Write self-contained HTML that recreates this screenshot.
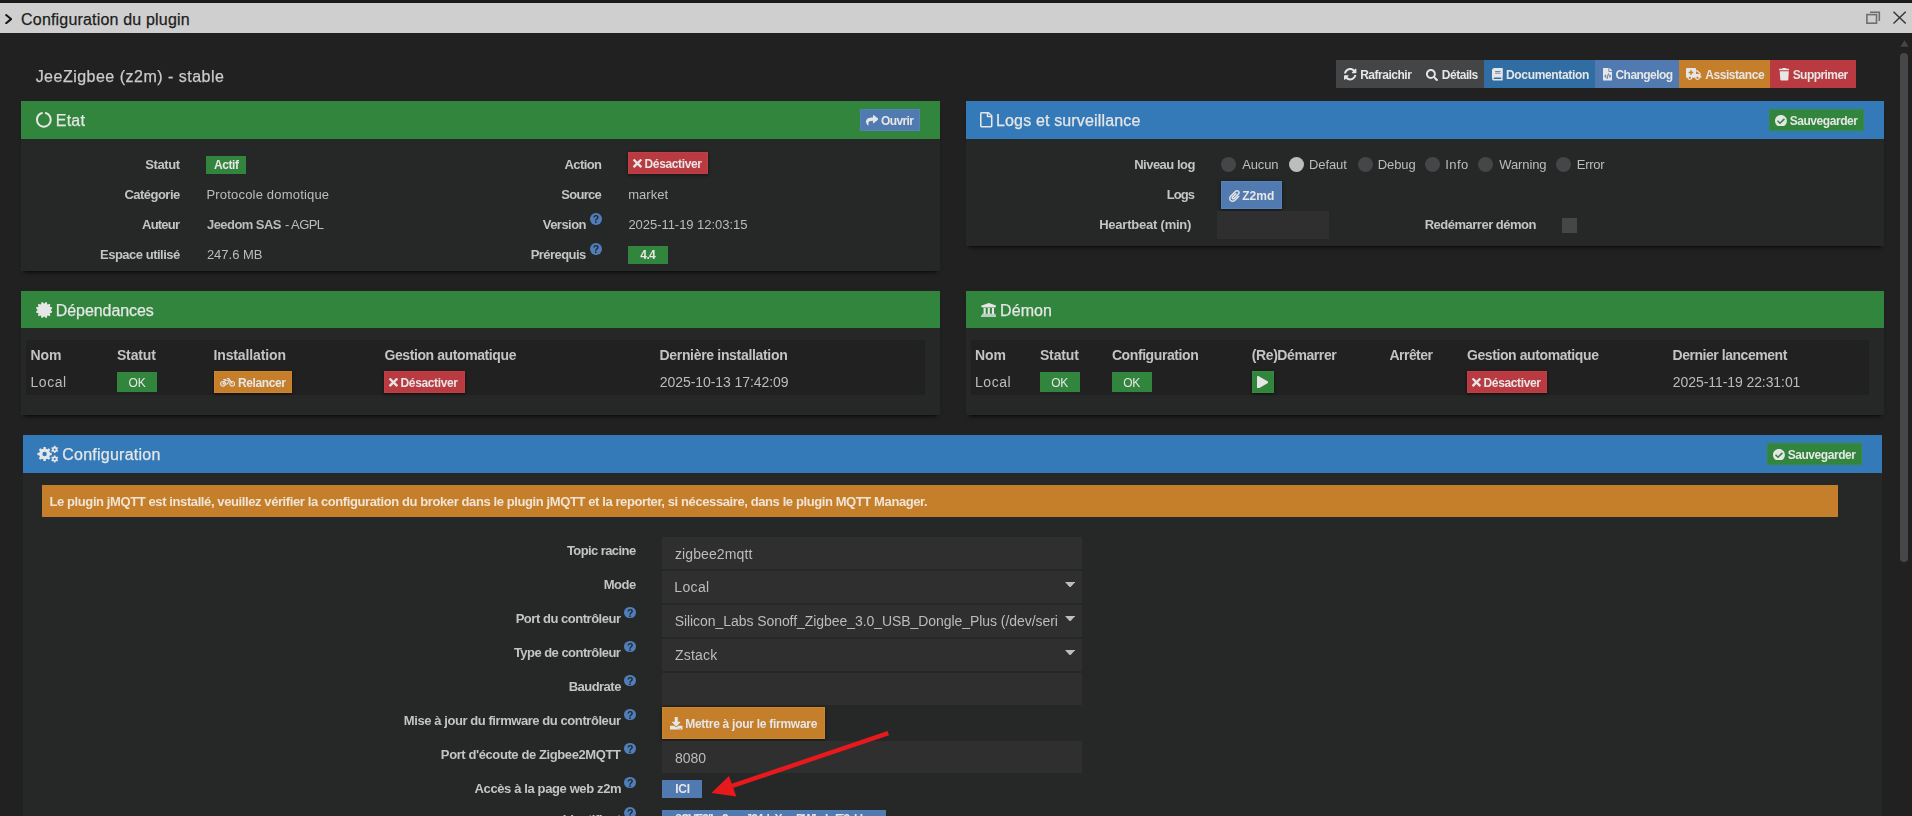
<!DOCTYPE html>
<html lang="fr">
<head>
<meta charset="utf-8">
<title>Configuration du plugin</title>
<style>
html,body{margin:0;padding:0;background:#212121;}
body{width:1912px;height:816px;overflow:hidden;position:relative;font-family:"Liberation Sans",sans-serif;}
#root{position:absolute;left:0;top:0;width:1912px;height:816px;overflow:hidden;background:#212121;}
#root div,#root svg,#root span.t,#root main,#root header{position:absolute;}
#root header{left:0;top:0;width:1912px;height:33px;}
#root main{left:0;top:0;width:1912px;height:816px;will-change:transform;}
span.t{white-space:pre;line-height:20px;height:20px;}
span.h{-webkit-text-stroke:0.25px currentColor;}
.sh{box-shadow:0 4px 4px -3px rgba(0,0,0,.85);}
.bs{box-shadow:0 1px 3px 0 rgba(0,0,0,.55);}
.q{border-radius:50%;text-align:center;font-weight:700;}
</style>
</head>
<body>
<div id="root">
<header>
<div style="left:0px;top:0px;width:1912px;height:3px;background:#1b1b1b;"></div>
<div style="left:0px;top:3px;width:1912px;height:30px;background:#cfcfcf;"></div>
<svg style="left:5.10px;top:13.70px" width="7.40" height="10.20" viewBox="27.5 37.7 265.0 436.7" preserveAspectRatio="none"><path d="M285.476 272.971L91.132 467.314c-9.373 9.373-24.569 9.373-33.941 0l-22.667-22.667c-9.357-9.357-9.375-24.522-.040-33.901L188.505 256 34.484 101.255c-9.335-9.379-9.317-24.544.040-33.901l22.667-22.667c9.373-9.373 24.569-9.373 33.941 0L285.475 239.030c9.373 9.372 9.373 24.568.001 33.941z" fill="#161616"/></svg>
<span class="t h" style="left:21.09px;top:10px;font-size:16px;color:#1d1d1d;letter-spacing:0.18px;">Configuration du plugin</span>
<svg style="left:1865px;top:10px;" width="16" height="15" viewBox="0 0 16 15"><path d="M5 2.2 H14.3 V11" fill="none" stroke="#6e6e6e" stroke-width="1.6"/><rect x="1.9" y="4.6" width="9.6" height="8.6" fill="none" stroke="#6e6e6e" stroke-width="1.6"/></svg>
<svg style="left:1892px;top:10px;" width="15" height="15" viewBox="0 0 15 15"><path d="M1.5 1.7 L13.7 13.5 M13.7 1.7 L1.5 13.5" fill="none" stroke="#333" stroke-width="1.4"/></svg>
</header>
<main>
<svg style="left:1900px;top:40px;" width="9" height="7" viewBox="0 0 9 7"><path d="M4.5 0.3 L8.6 6.8 L0.4 6.8 Z" fill="#464749"/></svg>
<div style="left:1900px;top:53px;width:8px;height:509px;background:#464749;border-radius:4px;"></div>
<span class="t h" style="left:35.64px;top:67px;font-size:16px;color:#cacaca;letter-spacing:0.49px;">JeeZigbee (z2m) - stable</span>
<nav>
<div style="left:1336px;top:60px;width:148px;height:28px;background:#444547;"></div>
<div style="left:1484px;top:60px;width:111px;height:28px;background:#2f6da3;"></div>
<div style="left:1595px;top:60px;width:84px;height:28px;background:#507ab0;"></div>
<div style="left:1679px;top:60px;width:91px;height:28px;background:#c57e2a;"></div>
<div style="left:1770px;top:60px;width:86px;height:28px;background:#b93a40;"></div>
<svg style="left:1344.15px;top:68.35px" width="12.40" height="12.40" viewBox="8.0 8.0 496.0 496.0" preserveAspectRatio="none"><path d="M370.72 133.28C339.458 104.008 298.888 87.962 255.848 88c-77.458.068-144.328 53.178-162.791 126.85-1.344 5.363-6.122 9.15-11.651 9.15H24.103c-7.498 0-13.194-6.807-11.807-14.176C33.933 94.924 134.813 8 256 8c66.448 0 126.791 26.136 171.315 68.685L463.03 40.97C478.149 25.851 504 36.559 504 57.941V192c0 13.255-10.745 24-24 24H345.941c-21.382 0-32.09-25.851-16.971-40.971l41.75-41.749zM32 296h134.059c21.382 0 32.09 25.851 16.971 40.971l-41.75 41.75c31.262 29.273 71.835 45.319 114.876 45.28 77.418-.07 144.315-53.144 162.787-126.849 1.344-5.363 6.122-9.15 11.651-9.15h57.304c7.498 0 13.194 6.807 11.807 14.176C478.067 417.076 377.187 504 256 504c-66.448 0-126.791-26.136-171.315-68.685L48.97 471.03C33.851 486.149 8 475.441 8 454.059V320c0-13.255 10.745-24 24-24z" fill="#e6e6e6"/></svg>
<span class="t" style="left:1360.16px;top:65px;font-size:12px;color:#e6e6e6;font-weight:700;letter-spacing:-0.48px;">Rafraichir</span>
<svg style="left:1426.05px;top:68.55px" width="12.10" height="12.20" viewBox="0.0 0.0 512.0 512.1" preserveAspectRatio="none"><path d="M505 442.7L405.3 343c-4.5-4.5-10.6-7-17-7H372c27.6-35.3 44-79.7 44-128C416 93.1 322.9 0 208 0S0 93.1 0 208s93.1 208 208 208c48.3 0 92.7-16.4 128-44v16.3c0 6.4 2.5 12.5 7 17l99.7 99.7c9.4 9.4 24.6 9.4 33.9 0l28.3-28.3c9.4-9.4 9.4-24.6.1-34zM208 336c-70.7 0-128-57.2-128-128 0-70.7 57.2-128 128-128 70.7 0 128 57.2 128 128 0 70.7-57.2 128-128 128z" fill="#e6e6e6"/></svg>
<span class="t" style="left:1441.86px;top:65px;font-size:12px;color:#e6e6e6;font-weight:700;letter-spacing:-0.49px;">Détails</span>
<svg style="left:1492.25px;top:68.25px" width="10.80" height="12.50" viewBox="0.0 0.0 448.0 512.0" preserveAspectRatio="none"><path d="M448 360V24c0-13.3-10.7-24-24-24H96C43 0 0 43 0 96v320c0 53 43 96 96 96h328c13.3 0 24-10.7 24-24v-16c0-7.5-3.5-14.3-8.9-18.700-4.200-15.400-4.200-59.300 0-74.700 5.400-4.300 8.900-11.100 8.900-18.600zM128 134c0-3.300 2.700-6 6-6h212c3.300 0 6 2.700 6 6v20c0 3.300-2.700 6-6 6H134c-3.300 0-6-2.700-6-6v-20zm0 64c0-3.300 2.700-6 6-6h212c3.300 0 6 2.700 6 6v20c0 3.300-2.700 6-6 6H134c-3.300 0-6-2.700-6-6v-20zm253.400 250H96c-17.700 0-32-14.300-32-32 0-17.600 14.400-32 32-32h285.400c-1.900 17.100-1.900 46.900 0 64z" fill="#e6e6e6"/></svg>
<span class="t" style="left:1506.06px;top:65px;font-size:12px;color:#e6e6e6;font-weight:700;letter-spacing:-0.34px;">Documentation</span>
<svg style="left:1602.65px;top:68.25px" width="9.40" height="12.50" viewBox="0.0 0.0 384.0 512.0" preserveAspectRatio="none"><path d="M384 121.941V128H256V0h6.059c6.365 0 12.47 2.529 16.971 7.029l97.941 97.941A24.005 24.005 0 0 1 384 121.941zM248 160c-13.2 0-24-10.8-24-24V0H24C10.745 0 0 10.745 0 24v464c0 13.255 10.745 24 24 24h336c13.255 0 24-10.745 24-24V160H248zM123.206 400.505a5.4 5.4 0 0 1-7.633.246l-64.866-60.812a5.4 5.4 0 0 1 0-7.879l64.866-60.812a5.4 5.4 0 0 1 7.633.246l19.579 20.885a5.4 5.4 0 0 1-.372 7.747L101.65 336l40.763 35.874a5.4 5.4 0 0 1 .372 7.747l-19.579 20.884zm51.295 50.479l-27.453-7.97a5.402 5.402 0 0 1-3.681-6.692l61.44-211.626a5.402 5.402 0 0 1 6.692-3.681l27.452 7.97a5.4 5.4 0 0 1 3.68 6.692l-61.44 211.626a5.397 5.397 0 0 1-6.69 3.681zm160.792-111.045l-64.866 60.812a5.4 5.4 0 0 1-7.633-.246l-19.58-20.885a5.4 5.4 0 0 1 .372-7.747L284.35 336l-40.763-35.874a5.4 5.4 0 0 1-.372-7.747l19.58-20.885a5.4 5.4 0 0 1 7.633-.246l64.866 60.812a5.4 5.4 0 0 1-.001 7.879z" fill="#e6e6e6"/></svg>
<span class="t" style="left:1615.52px;top:65px;font-size:12px;color:#e6e6e6;font-weight:700;letter-spacing:-0.56px;">Changelog</span>
<svg style="left:1686.25px;top:68.45px" width="15.40" height="12.10" viewBox="0.0 0.0 640.0 512.0" preserveAspectRatio="none"><path d="M624 352h-16V243.900c0-12.700-5.100-24.900-14.100-33.900L494 110.100c-9-9-21.200-14.100-33.900-14.100H416V48c0-26.500-21.500-48-48-48H48C21.500 0 0 21.500 0 48v320c0 26.500 21.500 48 48 48h16c0 53 43 96 96 96s96-43 96-96h128c0 53 43 96 96 96s96-43 96-96h48c8.800 0 16-7.200 16-16v-32c0-8.800-7.200-16-16-16zM160 464c-26.500 0-48-21.500-48-48s21.500-48 48-48 48 21.500 48 48-21.500 48-48 48zm144-248c0 4.400-3.600 8-8 8h-56v56c0 4.400-3.600 8-8 8h-48c-4.400 0-8-3.600-8-8v-56h-56c-4.400 0-8-3.600-8-8v-48c0-4.400 3.600-8 8-8h56v-56c0-4.400 3.600-8 8-8h48c4.400 0 8 3.600 8 8v56h56c4.400 0 8 3.600 8 8v48zm176 248c-26.500 0-48-21.500-48-48s21.500-48 48-48 48 21.500 48 48-21.500 48-48 48zm80-208H416V144h44.100l99.900 99.900V256z" fill="#e6e6e6"/></svg>
<span class="t" style="left:1705.29px;top:65px;font-size:12px;color:#e6e6e6;font-weight:700;letter-spacing:-0.45px;">Assistance</span>
<svg style="left:1778.55px;top:68.25px" width="10.60" height="12.50" viewBox="0.0 -0.0 448.0 512.0" preserveAspectRatio="none"><path d="M432 32H312l-9.400-18.700A24 24 0 0 0 281.100 0H166.800a23.720 23.720 0 0 0-21.400 13.300L136 32H16A16 16 0 0 0 0 48v32a16 16 0 0 0 16 16h416a16 16 0 0 0 16-16V48a16 16 0 0 0-16-16zM53.200 467a48 48 0 0 0 47.900 45h245.800a48 48 0 0 0 47.900-45L416 128H32z" fill="#e6e6e6"/></svg>
<span class="t" style="left:1792.66px;top:65px;font-size:12px;color:#e6e6e6;font-weight:700;letter-spacing:-0.55px;">Supprimer</span>
</nav>
<section>
<div class="sh" style="left:21px;top:101px;width:919px;height:170px;background:#262828;"></div>
<div style="left:21px;top:101px;width:919px;height:38px;background:#32853c;"></div>
<svg style="left:36.05px;top:112.05px" width="15.70" height="15.70" viewBox="8.0 15.0 496.0 489.0" preserveAspectRatio="none"><path d="M288 39.056v16.659c0 10.804 7.281 20.159 17.686 23.066C383.204 100.434 440 171.518 440 256c0 101.689-82.295 184-184 184-101.689 0-184-82.295-184-184 0-84.470 56.786-155.564 134.312-177.219C216.719 75.874 224 66.517 224 55.712V39.064c0-15.709-14.834-27.153-30.046-23.234C86.603 43.482 7.394 141.206 8.003 257.332c.72 137.052 111.477 246.956 248.531 246.667C393.255 503.711 504 392.788 504 256c0-115.633-79.140-212.779-186.211-240.236C302.678 11.889 288 23.456 288 39.056z" fill="#e6e6e6"/></svg>
<span class="t h" style="left:55.73px;top:111px;font-size:16px;color:#e6e6e6;letter-spacing:0.25px;">Etat</span>
<div style="left:860px;top:109px;width:60px;height:22px;background:#507ab0;box-shadow:inset 0 0 0 1px #5681bb;"></div>
<svg style="left:866.05px;top:115.25px" width="12.40" height="10.50" viewBox="0.0 32.0 512.0 448.0" preserveAspectRatio="none"><path d="M503.691 189.836L327.687 37.851C312.281 24.546 288 35.347 288 56.015v80.053C127.371 137.907 0 170.100 0 322.326c0 61.441 39.581 122.309 83.333 154.132 13.653 9.931 33.111-2.533 28.077-18.631C66.066 312.814 132.917 274.316 288 272.085V360c0 20.700 24.300 31.453 39.687 18.164l176.004-152c11.071-9.562 11.086-26.753 0-36.328z" fill="#e6e6e6"/></svg>
<span class="t" style="left:881.12px;top:111px;font-size:12px;color:#e6e6e6;font-weight:700;letter-spacing:-0.66px;">Ouvrir</span>
<span class="t" style="left:145.34px;top:155px;font-size:13px;color:#c4c4c4;font-weight:700;letter-spacing:-0.44px;">Statut</span>
<div style="left:206px;top:156px;width:40px;height:18px;background:#32853c;"></div>
<span class="t" style="left:214.09px;top:155px;font-size:12px;color:#e6e6e6;font-weight:700;letter-spacing:-0.45px;">Actif</span>
<span class="t" style="left:124.49px;top:185px;font-size:13px;color:#c4c4c4;font-weight:700;letter-spacing:-0.53px;">Catégorie</span>
<span class="t" style="left:206.45px;top:185px;font-size:13px;color:#bcbcbc;letter-spacing:0.19px;">Protocole domotique</span>
<span class="t" style="left:142.05px;top:215px;font-size:13px;color:#c4c4c4;font-weight:700;letter-spacing:-0.78px;">Auteur</span>
<span class="t" style="left:207.05px;top:215px;font-size:13px;color:#bcbcbc;font-weight:700;letter-spacing:-0.57px;">Jeedom SAS</span>
<span class="t" style="left:284.95px;top:215px;font-size:13px;color:#bcbcbc;letter-spacing:-0.55px;">- AGPL</span>
<span class="t" style="left:99.97px;top:245px;font-size:13px;color:#c4c4c4;font-weight:700;letter-spacing:-0.49px;">Espace utilisé</span>
<span class="t" style="left:206.89px;top:245px;font-size:13px;color:#bcbcbc;">247.6 MB</span>
<span class="t" style="left:564.55px;top:155px;font-size:13px;color:#c4c4c4;font-weight:700;letter-spacing:-0.59px;">Action</span>
<div style="left:628px;top:152px;width:80px;height:22px;background:#b93a40;box-shadow:inset 0 0 0 1px #c23d44,0 1px 3px 0 rgba(0,0,0,.55);"></div>
<svg style="left:633.45px;top:159.25px" width="8.90" height="8.70" viewBox="0.0 80.0 352.0 352.0" preserveAspectRatio="none"><path d="M242.720 256l100.070-100.070c12.280-12.280 12.280-32.190 0-44.480l-22.240-22.240c-12.280-12.280-32.190-12.280-44.480 0L176 189.280 75.930 89.210c-12.280-12.280-32.190-12.280-44.480 0L9.210 111.450c-12.280 12.280-12.280 32.190 0 44.480L109.280 256 9.210 356.070c-12.280 12.280-12.280 32.190 0 44.480l22.240 22.240c12.280 12.280 32.200 12.280 44.480 0L176 322.720l100.070 100.070c12.280 12.280 32.200 12.280 44.480 0l22.240-22.240c12.280-12.280 12.280-32.190 0-44.480L242.720 256z" fill="#e6e6e6"/></svg>
<span class="t" style="left:644.56px;top:154px;font-size:12px;color:#e6e6e6;font-weight:700;letter-spacing:-0.36px;">Désactiver</span>
<span class="t" style="left:561.34px;top:185px;font-size:13px;color:#c4c4c4;font-weight:700;letter-spacing:-0.71px;">Source</span>
<span class="t" style="left:628.15px;top:185px;font-size:13px;color:#bcbcbc;letter-spacing:0.04px;">market</span>
<span class="t" style="left:542.76px;top:215px;font-size:13px;color:#c4c4c4;font-weight:700;letter-spacing:-0.53px;">Version</span>
<div class="q" style="left:590px;top:213.4px;width:11.8px;height:11.8px;line-height:12.4px;background:#4f7eba;color:#262828;font-size:10.5px;">?</div>
<span class="t" style="left:628.39px;top:215px;font-size:13px;color:#bcbcbc;letter-spacing:-0.04px;">2025-11-19 12:03:15</span>
<span class="t" style="left:530.67px;top:245px;font-size:13px;color:#c4c4c4;font-weight:700;letter-spacing:-0.54px;">Prérequis</span>
<div class="q" style="left:590px;top:243.4px;width:11.8px;height:11.8px;line-height:12.4px;background:#4f7eba;color:#262828;font-size:10.5px;">?</div>
<div style="left:628px;top:246px;width:40px;height:18px;background:#32853c;"></div>
<span class="t" style="left:640.34px;top:245px;font-size:12px;color:#e6e6e6;font-weight:700;letter-spacing:-0.61px;">4.4</span>
</section>
<section>
<div class="sh" style="left:966px;top:101px;width:918px;height:145px;background:#262828;"></div>
<div style="left:966px;top:101px;width:918px;height:38px;background:#347ab8;"></div>
<svg style="left:980.25px;top:112.25px" width="12.50" height="15.50" viewBox="0.0 -0.1 384.0 512.1" preserveAspectRatio="none"><path d="M369.900 97.900L286 14C277 5 264.800-.1 252.100-.1H48C21.500 0 0 21.500 0 48v416c0 26.500 21.500 48 48 48h288c26.500 0 48-21.500 48-48V131.900c0-12.700-5.100-25-14.100-34zM332.100 128H256V51.900l76.100 76.100zM48 464V48h160v104c0 13.300 10.700 24 24 24h104v288H48z" fill="#e6e6e6"/></svg>
<span class="t h" style="left:996.03px;top:111px;font-size:16px;color:#e6e6e6;letter-spacing:0.15px;">Logs et surveillance</span>
<div style="left:1769px;top:109px;width:95px;height:22px;background:#32853c;box-shadow:inset 0 0 0 1px #358b3e;"></div>
<svg style="left:1774.85px;top:114.65px" width="11.90" height="11.80" viewBox="8.0 8.0 496.0 496.0" preserveAspectRatio="none"><path d="M504 256c0 136.967-111.033 248-248 248S8 392.967 8 256 119.033 8 256 8s248 111.033 248 248zM227.314 387.314l184-184c6.248-6.248 6.248-16.379 0-22.627l-22.627-22.627c-6.248-6.249-16.379-6.249-22.628 0L216 308.118l-70.059-70.059c-6.248-6.248-16.379-6.248-22.628 0l-22.627 22.627c-6.248 6.248-6.248 16.379 0 22.627l104 104c6.249 6.249 16.379 6.249 22.628.001z" fill="#e6e6e6"/></svg>
<span class="t" style="left:1789.66px;top:111px;font-size:12px;color:#e6e6e6;font-weight:700;letter-spacing:-0.44px;">Sauvegarder</span>
<span class="t" style="left:1134.17px;top:155px;font-size:13px;color:#c4c4c4;font-weight:700;letter-spacing:-0.5px;">Niveau log</span>
<div style="left:1221px;top:157px;width:15px;height:15px;background:#454648;border-radius:50%;"></div>
<span class="t" style="left:1242.3px;top:155px;font-size:13px;color:#bcbcbc;letter-spacing:-0.17px;">Aucun</span>
<div style="left:1289px;top:157px;width:15px;height:15px;background:#bdbdbd;border-radius:50%;"></div>
<span class="t" style="left:1308.95px;top:155px;font-size:13px;color:#bcbcbc;letter-spacing:-0.08px;">Defaut</span>
<div style="left:1358px;top:157px;width:15px;height:15px;background:#454648;border-radius:50%;"></div>
<span class="t" style="left:1377.75px;top:155px;font-size:13px;color:#bcbcbc;letter-spacing:-0.09px;">Debug</span>
<div style="left:1425px;top:157px;width:15px;height:15px;background:#454648;border-radius:50%;"></div>
<span class="t" style="left:1445.32px;top:155px;font-size:13px;color:#bcbcbc;letter-spacing:0.42px;">Info</span>
<div style="left:1478px;top:157px;width:15px;height:15px;background:#454648;border-radius:50%;"></div>
<span class="t" style="left:1499.32px;top:155px;font-size:13px;color:#bcbcbc;letter-spacing:-0.11px;">Warning</span>
<div style="left:1556px;top:157px;width:15px;height:15px;background:#454648;border-radius:50%;"></div>
<span class="t" style="left:1576.75px;top:155px;font-size:13px;color:#bcbcbc;letter-spacing:-0.28px;">Error</span>
<span class="t" style="left:1166.67px;top:185px;font-size:13px;color:#c4c4c4;font-weight:700;letter-spacing:-0.87px;">Logs</span>
<div style="left:1221px;top:181px;width:61px;height:28px;background:#507ab0;box-shadow:inset 0 0 0 1px #5681bb,0 1px 3px 0 rgba(0,0,0,.55);"></div>
<svg style="left:1229.05px;top:189.55px" width="10.80" height="12.00" viewBox="0.0 -0.0 448.0 512.0" preserveAspectRatio="none"><path d="M43.246 466.142c-58.430-60.289-57.341-157.511 1.386-217.581L254.392 34c44.316-45.332 116.351-45.336 160.671 0 43.890 44.894 43.943 117.329 0 162.276L232.214 383.128c-29.855 30.537-78.633 30.111-107.982-.998-28.275-29.970-27.368-77.473 1.452-106.953l143.743-146.835c6.182-6.314 16.312-6.422 22.626-.241l22.861 22.379c6.315 6.182 6.422 16.312.241 22.626L171.427 319.927c-4.932 5.045-5.236 13.428-.648 18.292 4.372 4.634 11.245 4.711 15.688.165l182.849-186.851c19.613-20.062 19.613-52.725-.011-72.798-19.189-19.627-49.957-19.637-69.154 0L90.390 293.295c-34.763 35.560-35.299 93.120-1.191 128.313 34.010 35.093 88.985 35.137 123.058.286l172.060-175.999c6.177-6.319 16.307-6.433 22.626-.256l22.877 22.364c6.319 6.177 6.434 16.307.256 22.626l-172.060 175.998c-59.576 60.938-155.943 60.216-214.770-.485z" fill="#e6e6e6"/></svg>
<span class="t" style="left:1242.29px;top:186px;font-size:12px;color:#e6e6e6;font-weight:700;letter-spacing:-0.01px;">Z2md</span>
<span class="t" style="left:1099.17px;top:215px;font-size:13px;color:#c4c4c4;font-weight:700;letter-spacing:-0.22px;">Heartbeat (min)</span>
<div style="left:1217px;top:211px;width:112px;height:28px;background:#2f2f2f;"></div>
<span class="t" style="left:1424.67px;top:215px;font-size:13px;color:#c4c4c4;font-weight:700;letter-spacing:-0.49px;">Redémarrer démon</span>
<div style="left:1562px;top:218px;width:15px;height:15px;background:#454648;"></div>
</section>
<section>
<div class="sh" style="left:21px;top:291px;width:919px;height:124px;background:#262828;"></div>
<div style="left:21px;top:291px;width:919px;height:37px;background:#32853c;"></div>
<svg style="left:35.85px;top:301.95px" width="16.30" height="16.00" viewBox="0.0 -0.0 512.0 512.0" preserveAspectRatio="none"><path d="M458.622 255.920l45.985-45.005c13.708-12.977 7.316-36.039-10.664-40.339l-62.650-15.990 17.661-62.015c4.991-17.838-11.829-34.663-29.661-29.671l-61.994 17.667-15.984-62.671C337.085.197 313.765-6.276 300.990 7.228L256 53.570 211.011 7.229c-12.630-13.351-36.047-7.234-40.325 10.668l-15.984 62.671-61.995-17.667C74.870 57.907 58.056 74.738 63.046 92.572l17.661 62.015-62.650 15.990C.069 174.878-6.310 197.944 7.392 210.915l45.985 45.005-45.985 45.004c-13.708 12.977-7.316 36.039 10.664 40.339l62.650 15.990-17.661 62.015c-4.991 17.838 11.829 34.663 29.661 29.671l61.994-17.667 15.984 62.671c4.439 18.575 27.696 24.018 40.325 10.668L256 458.610l44.989 46.001c12.500 13.488 35.987 7.486 40.325-10.668l15.984-62.671 61.994 17.667c17.836 4.994 34.651-11.837 29.661-29.671l-17.661-62.015 62.650-15.990c17.987-4.302 24.366-27.367 10.664-40.339l-45.984-45.004z" fill="#e6e6e6"/></svg>
<span class="t h" style="left:55.73px;top:301px;font-size:16px;color:#e6e6e6;letter-spacing:-0.06px;">Dépendances</span>
<div style="left:26px;top:340px;width:899px;height:55px;background:#212121;"></div>
<span class="t" style="left:30.6px;top:345px;font-size:14px;color:#c4c4c4;font-weight:700;letter-spacing:-0.15px;">Nom</span>
<span class="t" style="left:116.92px;top:345px;font-size:14px;color:#c4c4c4;font-weight:700;letter-spacing:-0.12px;">Statut</span>
<span class="t" style="left:213.5px;top:345px;font-size:14px;color:#c4c4c4;font-weight:700;letter-spacing:-0.13px;">Installation</span>
<span class="t" style="left:384.41px;top:345px;font-size:14px;color:#c4c4c4;font-weight:700;letter-spacing:-0.4px;">Gestion automatique</span>
<span class="t" style="left:659.5px;top:345px;font-size:14px;color:#c4c4c4;font-weight:700;letter-spacing:-0.32px;">Dernière installation</span>
<span class="t" style="left:30.47px;top:372px;font-size:14px;color:#bcbcbc;letter-spacing:0.56px;">Local</span>
<div style="left:117px;top:372px;width:40px;height:20px;background:#32853c;"></div>
<span class="t" style="left:128.57px;top:373px;font-size:12px;color:#e6e6e6;letter-spacing:-0.14px;">OK</span>
<div style="left:214px;top:371px;width:78px;height:22px;background:#c57e2a;box-shadow:inset 0 0 0 1px #d0852d,0 1px 3px 0 rgba(0,0,0,.55);"></div>
<svg style="left:219.75px;top:378.25px" width="15.30" height="8.70" viewBox="-0.0 64.0 640.0 384.0" preserveAspectRatio="none"><path d="M512.509 192.001c-16.373-.064-32.030 2.955-46.436 8.495l-77.680-125.153A24 24 0 0 0 368.001 64h-64c-8.837 0-16 7.163-16 16v16c0 8.837 7.163 16 16 16h50.649l14.896 24H256.002v-16c0-8.837-7.163-16-16-16h-87.459c-13.441 0-24.777 10.999-24.536 24.437.232 13.044 10.876 23.563 23.995 23.563h48.726l-29.417 47.520c-13.433-4.830-27.904-7.483-42.992-7.520C57.094 191.820-.337 249.742.001 320.974.330 391.386 57.520 448 128.002 448c59.642 0 109.758-40.793 123.967-96h52.033a24 24 0 0 0 20.406-11.367L410.370 201.770l14.938 24.067c-25.455 23.448-41.385 57.081-41.307 94.437.145 68.833 57.899 127.051 126.729 127.719 70.606.685 128.181-55.803 129.255-125.996 1.086-70.941-56.526-129.720-127.476-129.996zM186.750 265.772c9.727 10.529 16.673 23.661 19.642 38.228h-43.306l23.664-38.228zM128.002 400c-44.112 0-80-35.888-80-80s35.888-80 80-80c5.869 0 11.586.653 17.099 1.859l-45.505 73.509C89.715 331.327 101.213 352 120.002 352h81.300c-12.370 28.225-40.562 48-73.300 48zm162.630-96h-35.624c-3.960-31.756-19.556-59.894-42.383-80.026L237.371 184h127.547l-74.286 120zm217.057 95.886c-41.036-2.165-74.049-35.692-75.627-76.755-.812-21.121 6.633-40.518 19.335-55.263l44.433 71.586c4.660 7.508 14.524 9.816 22.032 5.156l13.594-8.437c7.508-4.660 9.817-14.524 5.156-22.032l-44.468-71.643a79.901 79.901 0 0 1 19.858-2.497c44.112 0 80 35.888 80 80-.001 45.540-38.252 82.316-84.313 79.885z" fill="#e6e6e6"/></svg>
<span class="t" style="left:237.96px;top:373px;font-size:12px;color:#e6e6e6;font-weight:700;letter-spacing:-0.4px;">Relancer</span>
<div style="left:384px;top:371px;width:81px;height:22px;background:#b93a40;box-shadow:inset 0 0 0 1px #c23d44,0 1px 3px 0 rgba(0,0,0,.55);"></div>
<svg style="left:389.45px;top:378.25px" width="8.90" height="8.70" viewBox="0.0 80.0 352.0 352.0" preserveAspectRatio="none"><path d="M242.720 256l100.070-100.070c12.280-12.280 12.280-32.190 0-44.480l-22.240-22.240c-12.280-12.280-32.190-12.280-44.480 0L176 189.280 75.930 89.210c-12.280-12.280-32.190-12.280-44.480 0L9.210 111.450c-12.280 12.280-12.280 32.190 0 44.480L109.280 256 9.210 356.070c-12.280 12.280-12.280 32.190 0 44.480l22.240 22.240c12.280 12.280 32.200 12.280 44.480 0L176 322.720l100.070 100.070c12.280 12.280 32.200 12.280 44.480 0l22.240-22.240c12.280-12.280 12.280-32.190 0-44.480L242.720 256z" fill="#e6e6e6"/></svg>
<span class="t" style="left:400.56px;top:373px;font-size:12px;color:#e6e6e6;font-weight:700;letter-spacing:-0.36px;">Désactiver</span>
<span class="t" style="left:659.86px;top:372px;font-size:14px;color:#bcbcbc;letter-spacing:-0.07px;">2025-10-13 17:42:09</span>
</section>
<section>
<div class="sh" style="left:966px;top:291px;width:918px;height:124px;background:#262828;"></div>
<div style="left:966px;top:291px;width:918px;height:37px;background:#32853c;"></div>
<svg style="left:980.75px;top:303.15px" width="15.60" height="13.80" viewBox="16.0 32.0 480.0 448.0" preserveAspectRatio="none"><path d="M496 128v16a8 8 0 0 1-8 8h-24v12c0 6.627-5.373 12-12 12H60c-6.627 0-12-5.373-12-12v-12H24a8 8 0 0 1-8-8v-16a8 8 0 0 1 4.941-7.392l232-88a7.996 7.996 0 0 1 6.118 0l232 88A8 8 0 0 1 496 128zm-24 304H40c-13.255 0-24 10.745-24 24v16a8 8 0 0 0 8 8h464a8 8 0 0 0 8-8v-16c0-13.255-10.745-24-24-24zM96 192v192H60c-6.627 0-12 5.373-12 12v20h416v-20c0-6.627-5.373-12-12-12h-36V192h-64v192h-64V192h-64v192h-64V192H96z" fill="#e6e6e6"/></svg>
<span class="t h" style="left:1000.03px;top:301px;font-size:16px;color:#e6e6e6;letter-spacing:0.1px;">Démon</span>
<div style="left:971px;top:340px;width:898px;height:55px;background:#212121;"></div>
<span class="t" style="left:975.1px;top:345px;font-size:14px;color:#c4c4c4;font-weight:700;letter-spacing:-0.15px;">Nom</span>
<span class="t" style="left:1039.92px;top:345px;font-size:14px;color:#c4c4c4;font-weight:700;letter-spacing:-0.12px;">Statut</span>
<span class="t" style="left:1111.92px;top:345px;font-size:14px;color:#c4c4c4;font-weight:700;letter-spacing:-0.41px;">Configuration</span>
<span class="t" style="left:1251.83px;top:345px;font-size:14px;color:#c4c4c4;font-weight:700;letter-spacing:-0.42px;">(Re)Démarrer</span>
<span class="t" style="left:1389.54px;top:345px;font-size:14px;color:#c4c4c4;font-weight:700;letter-spacing:-0.55px;">Arrêter</span>
<span class="t" style="left:1466.91px;top:345px;font-size:14px;color:#c4c4c4;font-weight:700;letter-spacing:-0.4px;">Gestion automatique</span>
<span class="t" style="left:1672.5px;top:345px;font-size:14px;color:#c4c4c4;font-weight:700;letter-spacing:-0.46px;">Dernier lancement</span>
<span class="t" style="left:974.97px;top:372px;font-size:14px;color:#bcbcbc;letter-spacing:0.56px;">Local</span>
<div style="left:1040px;top:372px;width:40px;height:20px;background:#32853c;"></div>
<span class="t" style="left:1051.27px;top:373px;font-size:12px;color:#e6e6e6;letter-spacing:-0.34px;">OK</span>
<div style="left:1112px;top:372px;width:40px;height:20px;background:#32853c;"></div>
<span class="t" style="left:1123.27px;top:373px;font-size:12px;color:#e6e6e6;letter-spacing:-0.34px;">OK</span>
<div style="left:1252px;top:371px;width:22px;height:22px;background:#32853c;box-shadow:inset 0 0 0 1px #358b3e,0 1px 3px 0 rgba(0,0,0,.55);"></div>
<svg style="left:1257.45px;top:375.85px" width="11.10" height="12.50" viewBox="0.0 0.0 448.0 512.0" preserveAspectRatio="none"><path d="M424.400 214.700L72.400 6.600C43.800-10.300 0 6.100 0 47.900V464c0 37.500 40.700 60.100 72.400 41.300l352-208c31.400-18.500 31.500-64.100 0-82.600z" fill="#e6e6e6"/></svg>
<div style="left:1467px;top:371px;width:80px;height:22px;background:#b93a40;box-shadow:inset 0 0 0 1px #c23d44,0 1px 3px 0 rgba(0,0,0,.55);"></div>
<svg style="left:1472.45px;top:378.25px" width="8.90" height="8.70" viewBox="0.0 80.0 352.0 352.0" preserveAspectRatio="none"><path d="M242.720 256l100.070-100.070c12.280-12.280 12.280-32.190 0-44.480l-22.240-22.240c-12.280-12.280-32.190-12.280-44.480 0L176 189.280 75.930 89.210c-12.280-12.280-32.190-12.280-44.480 0L9.210 111.450c-12.280 12.280-12.280 32.190 0 44.480L109.280 256 9.210 356.070c-12.280 12.280-12.280 32.190 0 44.480l22.240 22.240c12.280 12.280 32.200 12.280 44.480 0L176 322.720l100.070 100.070c12.280 12.280 32.200 12.280 44.480 0l22.240-22.240c12.280-12.280 12.280-32.190 0-44.480L242.720 256z" fill="#e6e6e6"/></svg>
<span class="t" style="left:1483.56px;top:373px;font-size:12px;color:#e6e6e6;font-weight:700;letter-spacing:-0.36px;">Désactiver</span>
<span class="t" style="left:1672.86px;top:372px;font-size:14px;color:#bcbcbc;letter-spacing:-0.08px;">2025-11-19 22:31:01</span>
</section>
<section>
<div style="left:23px;top:435px;width:1859px;height:400px;background:#262828;"></div>
<div style="left:23px;top:435px;width:1859px;height:38px;background:#347ab8;"></div>
<svg style="left:36px;top:444px;" width="24" height="20" viewBox="36 444 24 20"><path fill-rule="evenodd" d="M51.70 452.82 L51.70 455.18 L49.96 455.24 L49.27 456.91 L50.46 458.19 L48.79 459.86 L47.51 458.67 L45.84 459.36 L45.78 461.10 L43.42 461.10 L43.36 459.36 L41.69 458.67 L40.41 459.86 L38.74 458.19 L39.93 456.91 L39.24 455.24 L37.50 455.18 L37.50 452.82 L39.24 452.76 L39.93 451.09 L38.74 449.81 L40.41 448.14 L41.69 449.33 L43.36 448.64 L43.42 446.90 L45.78 446.90 L45.84 448.64 L47.51 449.33 L48.79 448.14 L50.46 449.81 L49.27 451.09 L49.96 452.76 Z M46.80 454.00 a2.2 2.2 0 1 0 -4.4 0 a2.2 2.2 0 1 0 4.4 0 Z M58.23 450.51 L57.42 451.90 L56.53 451.39 L55.51 451.98 L55.51 453.01 L53.89 453.01 L53.89 451.98 L52.87 451.39 L51.98 451.90 L51.17 450.51 L52.07 449.99 L52.07 448.81 L51.17 448.29 L51.98 446.90 L52.87 447.41 L53.89 446.82 L53.89 445.79 L55.51 445.79 L55.51 446.82 L56.53 447.41 L57.42 446.90 L58.23 448.29 L57.33 448.81 L57.33 449.99 Z M55.70 449.40 a1.0 1.0 0 1 0 -2.0 0 a1.0 1.0 0 1 0 2.0 0 Z M58.23 460.11 L57.42 461.50 L56.53 460.99 L55.51 461.58 L55.51 462.61 L53.89 462.61 L53.89 461.58 L52.87 460.99 L51.98 461.50 L51.17 460.11 L52.07 459.59 L52.07 458.41 L51.17 457.89 L51.98 456.50 L52.87 457.01 L53.89 456.42 L53.89 455.39 L55.51 455.39 L55.51 456.42 L56.53 457.01 L57.42 456.50 L58.23 457.89 L57.33 458.41 L57.33 459.59 Z M55.70 459.00 a1.0 1.0 0 1 0 -2.0 0 a1.0 1.0 0 1 0 2.0 0 Z" fill="#e6e6e6"/></svg>
<span class="t h" style="left:62.29px;top:445px;font-size:16px;color:#e6e6e6;letter-spacing:0.24px;">Configuration</span>
<div style="left:1767px;top:443px;width:95px;height:22px;background:#32853c;box-shadow:inset 0 0 0 1px #358b3e;"></div>
<svg style="left:1772.85px;top:448.65px" width="11.90" height="11.80" viewBox="8.0 8.0 496.0 496.0" preserveAspectRatio="none"><path d="M504 256c0 136.967-111.033 248-248 248S8 392.967 8 256 119.033 8 256 8s248 111.033 248 248zM227.314 387.314l184-184c6.248-6.248 6.248-16.379 0-22.627l-22.627-22.627c-6.248-6.249-16.379-6.249-22.628 0L216 308.118l-70.059-70.059c-6.248-6.248-16.379-6.248-22.628 0l-22.627 22.627c-6.248 6.248-6.248 16.379 0 22.627l104 104c6.249 6.249 16.379 6.249 22.628.001z" fill="#e6e6e6"/></svg>
<span class="t" style="left:1787.66px;top:445px;font-size:12px;color:#e6e6e6;font-weight:700;letter-spacing:-0.44px;">Sauvegarder</span>
<div style="left:42px;top:485px;width:1796px;height:32px;background:#c57e2a;"></div>
<span class="t" style="left:49.47px;top:492px;font-size:13px;color:#f0e4d4;font-weight:700;letter-spacing:-0.4px;">Le plugin jMQTT est installé, veuillez vérifier la configuration du broker dans le plugin jMQTT et la reporter, si nécessaire, dans le plugin MQTT Manager.</span>
<span class="t" style="left:566.88px;top:541px;font-size:13px;color:#c4c4c4;font-weight:700;letter-spacing:-0.58px;">Topic racine</span>
<div style="left:662px;top:537px;width:420px;height:32px;background:#2f2f2f;"></div>
<span class="t" style="left:675.0px;top:544px;font-size:14px;color:#bcbcbc;letter-spacing:0.1px;">zigbee2mqtt</span>
<span class="t" style="left:603.67px;top:575px;font-size:13px;color:#c4c4c4;font-weight:700;letter-spacing:-0.46px;">Mode</span>
<div style="left:662px;top:571px;width:420px;height:32px;background:#2f2f2f;"></div>
<span class="t" style="left:674.37px;top:577px;font-size:14px;color:#bcbcbc;letter-spacing:0.33px;">Local</span>
<svg style="left:1064.8px;top:581.7px;" width="10.2" height="5.6" viewBox="0 0 10 5.5"><path d="M0 0 L10 0 L5 5.5 Z" fill="#bebebe"/></svg>
<span class="t" style="left:515.67px;top:609px;font-size:13px;color:#c4c4c4;font-weight:700;letter-spacing:-0.47px;">Port du contrôleur</span>
<div class="q" style="left:624.3px;top:606.6px;width:11.8px;height:11.8px;line-height:12.4px;background:#4f7eba;color:#262828;font-size:10.5px;">?</div>
<div style="left:662px;top:605px;width:420px;height:32px;background:#2f2f2f;"></div>
<span class="t" style="left:674.68px;top:611px;font-size:14px;color:#bcbcbc;letter-spacing:-0.06px;">Silicon_Labs Sonoff_Zigbee_3.0_USB_Dongle_Plus (/dev/seri</span>
<svg style="left:1064.8px;top:615.7px;" width="10.2" height="5.6" viewBox="0 0 10 5.5"><path d="M0 0 L10 0 L5 5.5 Z" fill="#bebebe"/></svg>
<span class="t" style="left:513.88px;top:643px;font-size:13px;color:#c4c4c4;font-weight:700;letter-spacing:-0.53px;">Type de contrôleur</span>
<div class="q" style="left:624.3px;top:640.6px;width:11.8px;height:11.8px;line-height:12.4px;background:#4f7eba;color:#262828;font-size:10.5px;">?</div>
<div style="left:662px;top:639px;width:420px;height:32px;background:#2f2f2f;"></div>
<span class="t" style="left:675.12px;top:645px;font-size:14px;color:#bcbcbc;letter-spacing:0.16px;">Zstack</span>
<svg style="left:1064.8px;top:649.7px;" width="10.2" height="5.6" viewBox="0 0 10 5.5"><path d="M0 0 L10 0 L5 5.5 Z" fill="#bebebe"/></svg>
<span class="t" style="left:568.67px;top:677px;font-size:13px;color:#c4c4c4;font-weight:700;letter-spacing:-0.52px;">Baudrate</span>
<div class="q" style="left:624.3px;top:674.6px;width:11.8px;height:11.8px;line-height:12.4px;background:#4f7eba;color:#262828;font-size:10.5px;">?</div>
<div style="left:662px;top:673px;width:420px;height:32px;background:#2f2f2f;"></div>
<span class="t" style="left:403.87px;top:711px;font-size:13px;color:#c4c4c4;font-weight:700;letter-spacing:-0.43px;">Mise à jour du firmware du contrôleur</span>
<div class="q" style="left:624.3px;top:708.6px;width:11.8px;height:11.8px;line-height:12.4px;background:#4f7eba;color:#262828;font-size:10.5px;">?</div>
<div style="left:662px;top:707px;width:163px;height:32px;background:#c57e2a;box-shadow:inset 0 0 0 1px #d0852d,0 1px 3px 0 rgba(0,0,0,.55);"></div>
<svg style="left:670.15px;top:717.15px" width="12.50" height="12.60" viewBox="0.0 0.0 512.0 512.0" preserveAspectRatio="none"><path d="M216 0h80c13.300 0 24 10.700 24 24v168h87.700c17.800 0 26.700 21.500 14.100 34.100L269.700 378.300c-7.500 7.500-19.800 7.500-27.300 0L90.100 226.100c-12.600-12.600-3.700-34.100 14.100-34.100H192V24c0-13.300 10.700-24 24-24zm296 376v112c0 13.300-10.700 24-24 24H24c-13.300 0-24-10.700-24-24V376c0-13.300 10.700-24 24-24h146.700l49 49c20.100 20.100 52.500 20.100 72.600 0l49-49H488c13.300 0 24 10.700 24 24zm-124 88c0-11-9-20-20-20s-20 9-20 20 9 20 20 20 20-9 20-20zm64 0c0-11-9-20-20-20s-20 9-20 20 9 20 20 20 20-9 20-20z" fill="#e6e6e6"/></svg>
<span class="t" style="left:685.16px;top:714px;font-size:12px;color:#e6e6e6;font-weight:700;letter-spacing:-0.27px;">Mettre à jour le firmware</span>
<span class="t" style="left:440.87px;top:745px;font-size:13px;color:#c4c4c4;font-weight:700;letter-spacing:-0.4px;">Port d'écoute de Zigbee2MQTT</span>
<div class="q" style="left:624.3px;top:742.6px;width:11.8px;height:11.8px;line-height:12.4px;background:#4f7eba;color:#262828;font-size:10.5px;">?</div>
<div style="left:662px;top:741px;width:420px;height:32px;background:#2f2f2f;"></div>
<span class="t" style="left:674.89px;top:748px;font-size:14px;color:#bcbcbc;letter-spacing:0.04px;">8080</span>
<span class="t" style="left:474.55px;top:779px;font-size:13px;color:#c4c4c4;font-weight:700;letter-spacing:-0.38px;">Accès à la page web z2m</span>
<div class="q" style="left:624.3px;top:776.6px;width:11.8px;height:11.8px;line-height:12.4px;background:#4f7eba;color:#262828;font-size:10.5px;">?</div>
<div style="left:662px;top:780px;width:40px;height:18px;background:#507ab0;"></div>
<span class="t" style="left:675.26px;top:779px;font-size:12px;color:#e6e6e6;font-weight:700;letter-spacing:-0.27px;">ICI</span>
<span class="t" style="left:562.67px;top:810px;font-size:13px;color:#c4c4c4;font-weight:700;letter-spacing:-0.37px;">Identifiant</span>
<div class="q" style="left:624.3px;top:806.9px;width:11.8px;height:11.8px;line-height:12.4px;background:#4f7eba;color:#262828;font-size:10.5px;">?</div>
<div style="left:662px;top:810.2px;width:224px;height:18px;background:#507ab0;"></div>
<span class="t" style="left:675.14px;top:809px;font-size:12px;color:#e6e6e6;font-weight:700;letter-spacing:-1.05px;">8CVE3lLx9mwJ24dvXmzPWkqLrFj3zkLn</span>
<svg style="left:700px;top:720px;" width="200" height="90" viewBox="0 0 200 90"><path d="M188.3 13.2 L32.3 65.9" stroke="#e8191c" stroke-width="4.4" fill="none"/><path d="M11.4 73 L29 56 L36.3 76.6 Z" fill="#e8191c"/></svg>
</section>
</main>
</div>
</body>
</html>
